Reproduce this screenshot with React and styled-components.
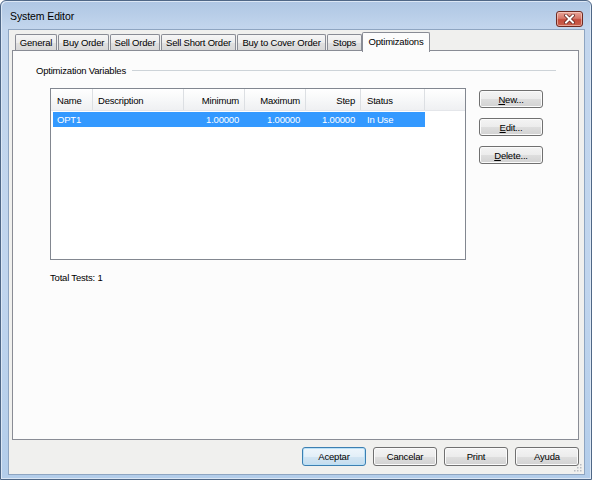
import React from 'react';
import styled, { createGlobalStyle } from 'styled-components';

const Global = createGlobalStyle`
  html, body { margin: 0; padding: 0; background: #ffffff; }
  body {
    font-family: "Liberation Sans", Arial, sans-serif;
    font-size: 9.5px;
    letter-spacing: -0.2px;
    color: #000;
  }
`;

const Window = styled.div`
  position: relative;
  width: 592px;
  height: 480px;
  box-sizing: border-box;
  display: flex;
  flex-direction: column;
  padding: 0 6px 4px 7px;
  border: 1px solid #4f6786;
  border-radius: 6px 6px 0 0;
  background: linear-gradient(to bottom, #aec6e3 0px, #c3d6ed 28px, #c0d5ee 60%, #b3cdea 100%);
  box-shadow: inset 1px 1px 0 #dbe7f5, inset -1px -1px 0 #dbe7f5;
`;

const TitleBar = styled.div`
  height: 28px;
  display: flex;
  align-items: center;
  padding: 2px 0 0 2px;
  box-sizing: border-box;
`;

const Title = styled.div`
  flex: 1;
  font-size: 10.5px;
  letter-spacing: -0.1px;
  color: #000;
`;

const CloseButton = styled.div`
  align-self: flex-start;
  margin: 8px 2px 0 0;
  width: 27px;
  height: 16px;
  box-sizing: border-box;
  border: 1px solid #6e2a22;
  border-radius: 3px;
  background: linear-gradient(to bottom, #e9a599 0%, #d6786a 45%, #c44c3c 55%, #c9604d 100%);
  box-shadow: inset 0 0 0 1px rgba(255, 220, 210, 0.55);
  display: flex;
  align-items: center;
  justify-content: center;
`;

const Client = styled.div`
  position: relative;
  flex: 1;
  display: flex;
  flex-direction: column;
  box-sizing: border-box;
  border: 1px solid #8ea5c1;
  background: #f0f0ee;
  padding: 2px 5px 0 3px;
`;

const TabStrip = styled.div`
  height: 18px;
  display: flex;
  align-items: flex-end;
  padding-left: 3px;
  position: relative;
  z-index: 2;
`;

const Tab = styled.div`
  box-sizing: border-box;
  width: ${p => p.$w}px;
  height: ${p => (p.$active ? 20 : 16)}px;
  margin-right: ${p => (p.$active ? 0 : 1)}px;
  margin-left: ${p => (p.$active ? -1 : 0)}px;
  margin-bottom: ${p => (p.$active ? -2 : 0)}px;
  border: 1px solid #898c95;
  border-bottom: none;
  border-radius: 2px 2px 0 0;
  background: ${p =>
    p.$active
      ? '#fcfcfc'
      : 'linear-gradient(to bottom, #f6f6f6 0%, #ececec 50%, #e0e0e0 51%, #d8d8d8 100%)'};
  display: flex;
  align-items: ${p => (p.$active ? 'flex-start' : 'center')};
  padding-top: ${p => (p.$active ? 3 : 0)}px;
  justify-content: center;
  white-space: nowrap;
`;

const Panel = styled.div`
  height: 390px;
  box-sizing: border-box;
  border: 1px solid #898c95;
  background: #fcfcfc;
  display: flex;
  flex-direction: column;
  position: relative;
  z-index: 1;
`;

const GroupHeader = styled.div`
  display: flex;
  align-items: center;
  margin: 13px 22px 0 23px;
  height: 13px;
`;

const GroupLabel = styled.span`
  line-height: 13px;
  white-space: nowrap;
`;

const GroupLine = styled.div`
  flex: 1;
  height: 1px;
  margin-left: 6px;
  background: #cdd3d8;
`;

const Body = styled.div`
  display: flex;
  align-items: flex-start;
  margin: 11px 0 0 37px;
`;

const LeftColumn = styled.div`
  display: flex;
  flex-direction: column;
`;

const ListView = styled.div`
  width: 416px;
  height: 172px;
  box-sizing: border-box;
  border: 1px solid #828790;
  background: #ffffff;
  display: flex;
  flex-direction: column;
`;

const HeaderRow = styled.div`
  display: flex;
  height: 22px;
  box-sizing: border-box;
  border-bottom: 1px solid #e4e6ea;
  background: linear-gradient(to bottom, #ffffff 0%, #f7f8f9 50%, #eff0f2 100%);
`;

const HeaderCell = styled.div`
  box-sizing: border-box;
  width: ${p => p.$w}px;
  flex: ${p => (p.$fill ? 1 : 'none')};
  border-right: ${p => (p.$fill ? 'none' : '1px solid #dcdfe3')};
  display: flex;
  align-items: center;
  padding-top: 1px;
  justify-content: ${p => (p.$right ? 'flex-end' : 'flex-start')};
  padding-left: ${p => (p.$right ? 0 : p.$pl ?? 6)}px;
  padding-right: ${p => (p.$right ? 5 : 0)}px;
  white-space: nowrap;
`;

const Row = styled.div`
  display: flex;
  height: 15px;
  margin: 1px 0 0 2px;
  align-self: flex-start;
  background: ${p => (p.$selected ? '#3399ff' : 'transparent')};
  color: ${p => (p.$selected ? '#ffffff' : '#000000')};
`;

const Cell = styled.div`
  box-sizing: border-box;
  width: ${p => p.$w}px;
  display: flex;
  align-items: center;
  justify-content: ${p => (p.$right ? 'flex-end' : 'flex-start')};
  padding-left: ${p => (p.$right ? 0 : p.$pl ?? 6)}px;
  padding-right: ${p => (p.$right ? 6 : 0)}px;
  white-space: nowrap;
`;

const TotalTests = styled.div`
  margin-top: 11px;
  line-height: 13px;
`;

const ButtonColumn = styled.div`
  display: flex;
  flex-direction: column;
  gap: 10px;
  margin: 2px 0 0 13px;
`;

const Button = styled.button`
  width: ${p => p.$w || 64}px;
  height: ${p => p.$h || 18}px;
  box-sizing: border-box;
  padding: 0;
  margin: 0;
  font: inherit;
  letter-spacing: inherit;
  color: #000;
  border: 1px solid ${p => (p.$default ? '#3c7fb1' : '#707070')};
  border-radius: 3px;
  background: ${p =>
    p.$default
      ? 'linear-gradient(to bottom, #eef6fc 0%, #e3eff8 50%, #d2e5f3 51%, #c4dcee 100%)'
      : 'linear-gradient(to bottom, #f4f4f4 0%, #ececec 50%, #dedede 51%, #d2d2d2 100%)'};
  box-shadow: inset 0 0 0 1px ${p => (p.$default ? '#b9e0f7' : '#fbfbfb')};
  display: flex;
  align-items: center;
  justify-content: center;
  cursor: default;
`;

const Footer = styled.div`
  display: flex;
  justify-content: flex-end;
  gap: 7px;
  padding-top: 7px;
`;

const Grip = styled.svg`
  position: absolute;
  right: 2px;
  bottom: 2px;
`;

const tabs = [
  { label: 'General', w: 42 },
  { label: 'Buy Order', w: 51 },
  { label: 'Sell Order', w: 50 },
  { label: 'Sell Short Order', w: 75 },
  { label: 'Buy to Cover Order', w: 89 },
  { label: 'Stops', w: 35 },
  { label: 'Optimizations', w: 68, active: true },
];

const columns = [
  { label: 'Name', w: 42, pl: 6 },
  { label: 'Description', w: 91, pl: 5 },
  { label: 'Minimum', w: 61, right: true },
  { label: 'Maximum', w: 61, right: true },
  { label: 'Step', w: 55, right: true },
  { label: 'Status', w: 64, pl: 6 },
];

const row = ['OPT1', '', '1.00000', '1.00000', '1.00000', 'In Use'];

export default function App() {
  return (
    <>
      <Global />
      <Window>
        <TitleBar>
          <Title>System Editor</Title>
          <CloseButton>
            <svg width="11" height="10" viewBox="0 0 11 10">
              <path d="M2 1.5 L9 8.5 M9 1.5 L2 8.5" stroke="#5a1a14" strokeWidth="3.4" strokeLinecap="square" />
              <path d="M2 1.5 L9 8.5 M9 1.5 L2 8.5" stroke="#ffffff" strokeWidth="2" strokeLinecap="square" />
            </svg>
          </CloseButton>
        </TitleBar>
        <Client>
          <TabStrip>
            {tabs.map(t => (
              <Tab key={t.label} $w={t.w} $active={t.active}>
                {t.label}
              </Tab>
            ))}
          </TabStrip>
          <Panel>
            <GroupHeader>
              <GroupLabel>Optimization Variables</GroupLabel>
              <GroupLine />
            </GroupHeader>
            <Body>
              <LeftColumn>
                <ListView>
                  <HeaderRow>
                    {columns.map(c => (
                      <HeaderCell key={c.label} $w={c.w} $right={c.right} $pl={c.pl}>
                        {c.label}
                      </HeaderCell>
                    ))}
                    <HeaderCell $fill />
                  </HeaderRow>
                  <Row $selected>
                    {columns.map((c, i) => (
                      <Cell
                        key={c.label}
                        $w={i === 0 ? c.w - 2 : c.w}
                        $right={c.right}
                        $pl={i === 0 ? 4 : c.pl}
                      >
                        {row[i]}
                      </Cell>
                    ))}
                  </Row>
                </ListView>
                <TotalTests>Total Tests: 1</TotalTests>
              </LeftColumn>
              <ButtonColumn>
                <Button><u>N</u>ew...</Button>
                <Button><u>E</u>dit...</Button>
                <Button><u>D</u>elete...</Button>
              </ButtonColumn>
            </Body>
          </Panel>
          <Footer>
            <Button $h={19} $default>Aceptar</Button>
            <Button $h={19}>Cancelar</Button>
            <Button $h={19}>Print</Button>
            <Button $h={19}>Ayuda</Button>
          </Footer>
          <Grip width="10" height="10" viewBox="0 0 10 10">
            {[[8, 2], [8, 5], [5, 5], [8, 8], [5, 8], [2, 8]].map(([x, y]) => (
              <rect key={`${x}-${y}`} x={x} y={y} width="1.5" height="1.5" fill="#b8bcc2" />
            ))}
          </Grip>
        </Client>
      </Window>
    </>
  );
}
